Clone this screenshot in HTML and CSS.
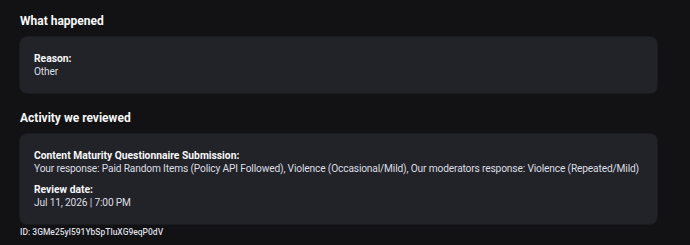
FILE: index.html
```html
<!DOCTYPE html>
<html>
<head>
<meta charset="utf-8">
<link rel="stylesheet" href="styles.css">
</head>
<body>
<main class="page">
  <section class="section">
    <h2 class="title">What happened</h2>
    <div class="card">
      <div class="field">
        <div class="label">Reason:</div>
        <div class="value">Other</div>
      </div>
    </div>
  </section>
  <section class="section">
    <h2 class="title">Activity we reviewed</h2>
    <div class="card">
      <div class="field">
        <div class="label">Content Maturity Questionnaire Submission:</div>
        <div class="value">Your response: Paid Random Items (Policy API Followed), Violence (Occasional/Mild), Our moderators response: Violence (Repeated/Mild)</div>
      </div>
      <div class="field">
        <div class="label">Review date:</div>
        <div class="value">Jul 11, 2026 | 7:00 PM</div>
      </div>
    </div>
    <div class="id">ID: 3GMe25yl591YbSpTluXG9eqP0dV</div>
  </section>
</main>
</body>
</html>
```
FILE: styles.css
```css
html, body {
  margin: 0;
  padding: 0;
  background: #121214;
}
body {
  font-family: Roboto, "Noto Sans", sans-serif;
  color: #dcdee3;
}
.page {
  width: 637px;
  padding: 13px 0 0 20px;
  display: flex;
  flex-direction: column;
  gap: 17px;
}
.title {
  margin: 0 0 8px 0;
  font-size: 12px;
  line-height: 16px;
  font-weight: 700;
  color: #f7f7f8;
}
.card {
  background: #222328;
  border-radius: 7px;
  padding: 15px 14px 15px;
  display: flex;
  flex-direction: column;
  gap: 8px;
  box-shadow: 0 0 0 1px #1a1b1f;
}
.label {
  font-size: 10.3px;
  line-height: 13px;
  font-weight: 700;
  color: #f7f7f8;
}
.value {
  font-size: 10.2px;
  line-height: 13px;
  letter-spacing: -0.15px;
  color: #dcdee3;
  white-space: nowrap;
}
.id {
  margin-top: 2px;
  font-size: 8.5px;
  line-height: 12px;
  font-weight: 500;
  color: #dcdee3;
}
```
